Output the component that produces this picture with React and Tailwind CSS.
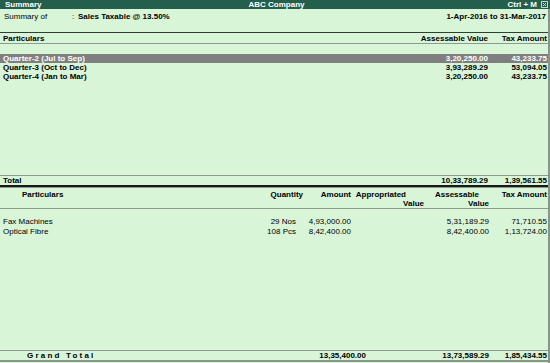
import React from "react";

const quarters = [
  { name: "Quarter-2 (Jul to Sep)", av: "3,20,250.00", tax: "43,233.75", sel: true },
  { name: "Quarter-3 (Oct to Dec)", av: "3,93,289.29", tax: "53,094.05" },
  { name: "Quarter-4 (Jan to Mar)", av: "3,20,250.00", tax: "43,233.75" },
];

const items = [
  { name: "Fax Machines", qty: "29 Nos", amt: "4,93,000.00", av: "5,31,189.29", tax: "71,710.55" },
  { name: "Optical Fibre", qty: "108 Pcs", amt: "8,42,400.00", av: "8,42,400.00", tax: "1,13,724.00" },
];

function CloseBox() {
  return (
    <svg width="7" height="7" viewBox="0 0 7 7" className="block">
      <rect x="0.5" y="0.5" width="6" height="6" fill="none" stroke="#c9d3cf" strokeWidth="1" />
      <path d="M2 2 L5 5 M5 2 L2 5" stroke="#c9d3cf" strokeWidth="1" />
    </svg>
  );
}

export default function App() {
  return (
    <div className="w-[550px] h-[363px] bg-[#d8f5d8] flex flex-col text-[8px] leading-[9px] text-black font-['Liberation_Sans',Arial,sans-serif] overflow-hidden">
      {/* Title bar */}
      <div className="h-[9px] bg-[#245e4d] text-white font-bold flex items-center shrink-0">
        <div className="flex-1 pl-[5px]">Summary</div>
        <div className="flex-1 text-center">ABC Company</div>
        <div className="flex-1 flex justify-end items-center gap-[4px] pr-[2px]">
          <span>Ctrl + M</span>
          <CloseBox />
        </div>
      </div>

      <div className="flex-1 flex flex-col border-r-2 border-[#8a948a]">
        {/* Info */}
        <div className="h-[24px] shrink-0 pt-[3px] flex border-b border-[#2f3f35]">
          <div className="w-[72px] pl-[4px]">Summary of</div>
          <div className="w-[6px]">:</div>
          <div className="flex-1 font-bold">Sales Taxable @ 13.50%</div>
          <div className="font-bold pr-[2px]">1-Apr-2016 to 31-Mar-2017</div>
        </div>

        {/* Top table header */}
        <div className="h-[11px] shrink-0 pt-[1px] flex font-bold border-b border-[#8e9a8e]">
          <div className="flex-1 pl-[3px]">Particulars</div>
          <div className="w-[80px] text-right">Assessable Value</div>
          <div className="w-[60px] text-right pr-[1px]">Tax Amount</div>
        </div>

        {/* Top table body */}
        <div className="h-[131px] shrink-0 pt-[10px] flex flex-col">
          {quarters.map((q) => (
            <div
              key={q.name}
              className={`h-[9px] flex font-bold ${q.sel ? "bg-[#7f7f7f] text-white" : ""}`}
            >
              <div className="flex-1 pl-[3px]">{q.name}</div>
              <div className="w-[80px] text-right">{q.av}</div>
              <div className="w-[60px] text-right pr-[1px]">{q.tax}</div>
            </div>
          ))}
        </div>

        {/* Total */}
        <div className="h-[12px] shrink-0 flex font-bold border-t border-[#8e9a8e] border-b-2 border-b-[#1a1a1a]">
          <div className="flex-1 pl-[3px]">Total</div>
          <div className="w-[80px] text-right">10,33,789.29</div>
          <div className="w-[60px] text-right pr-[1px]">1,39,561.55</div>
        </div>

        {/* Bottom header */}
        <div className="h-[22px] shrink-0 pt-[2px] flex font-bold border-t border-[#8e9a8e] border-b border-b-[#8e9a8e]">
          <div className="flex-1 pl-[22px]">Particulars</div>
          <div className="w-[42px] text-right">Quantity</div>
          <div className="w-[48px] text-right">Amount</div>
          <div className="w-[73px] flex flex-col">
            <div className="text-right pr-[18px]">Appropriated</div>
            <div className="text-right">Value</div>
          </div>
          <div className="w-[65px] flex flex-col">
            <div className="text-right pr-[10px]">Assessable</div>
            <div className="text-right">Value</div>
          </div>
          <div className="w-[59px] text-right pr-[1px]">Tax Amount</div>
        </div>

        {/* Bottom body */}
        <div className="flex-1 pt-[8px] flex flex-col">
          {items.map((it) => (
            <div key={it.name} className="h-[10px] flex">
              <div className="flex-1 pl-[3px]">{it.name}</div>
              <div className="w-[42px] text-right pr-[7px]">{it.qty}</div>
              <div className="w-[48px] text-right">{it.amt}</div>
              <div className="w-[73px]" />
              <div className="w-[65px] text-right">{it.av}</div>
              <div className="w-[59px] text-right pr-[1px]">{it.tax}</div>
            </div>
          ))}
        </div>

        {/* Grand total */}
        <div className="h-[12px] shrink-0 mb-[1px] flex font-bold border-t border-[#8e9a8e] border-b-2 border-b-[#8a948a]">
          <div className="flex-1 pl-[27px] tracking-[2.2px]">Grand Total</div>
          <div className="w-[80px] text-right">13,35,400.00</div>
          <div className="w-[58px]" />
          <div className="w-[65px] text-right">13,73,589.29</div>
          <div className="w-[59px] text-right pr-[1px]">1,85,434.55</div>
        </div>
      </div>
    </div>
  );
}
